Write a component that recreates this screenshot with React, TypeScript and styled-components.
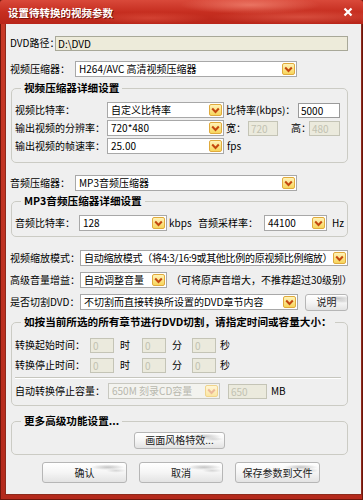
import styled, { createGlobalStyle } from 'styled-components';

const GlobalStyle = createGlobalStyle`
  html, body {
    margin: 0;
    padding: 0;
    background: #ffffff;
  }
  body {
    font-family: "Noto Sans CJK SC", "Liberation Sans", sans-serif;
    font-size: 10px;
    color: #000;
  }
  * {
    box-sizing: border-box;
  }
`;

const Window = styled.div`
  width: 363px;
  height: 500px;
  display: flex;
  flex-direction: column;
  background: linear-gradient(180deg, #c93a28, #b42a1c);
  box-shadow: inset 0 0 0 1px #6e160c;
`;

const TitleBar = styled.div`
  height: 24px;
  flex: none;
  display: flex;
  align-items: center;
  justify-content: space-between;
  padding: 0 10px 0 8px;
  background:
    radial-gradient(ellipse 70px 9px at 250px 5px, rgba(255, 160, 140, 0.55), transparent),
    radial-gradient(ellipse 90px 7px at 300px 17px, rgba(255, 140, 120, 0.35), transparent),
    radial-gradient(ellipse 60px 6px at 150px 18px, rgba(255, 120, 100, 0.3), transparent),
    linear-gradient(180deg, #d9493a 0%, #c62e20 50%, #b9261a 100%);
  border-radius: 3px 3px 0 0;
`;

const Title = styled.span`
  color: #fff;
  font-weight: 700;
  font-size: 10.5px;
  text-shadow: 1px 1px 0 #7a140a;
`;

const Frame = styled.div`
  flex: 1;
  display: flex;
  padding: 0 5px 5px;
`;

const Body = styled.div`
  flex: 1;
  display: flex;
  flex-direction: column;
  background: #efefef;
  border: 1px solid #8d2a1c;
  border-top: none;
  padding: 0 9px 0 4px;
`;

const Row = styled.div<{ $mt: number; $h?: number; $center?: boolean; $gap?: number }>`
  display: flex;
  align-items: center;
  justify-content: ${(p) => (p.$center ? 'center' : 'flex-start')};
  gap: ${(p) => p.$gap ?? 0}px;
  height: ${(p) => p.$h ?? 16}px;
  margin-top: ${(p) => p.$mt}px;
`;

const Text = styled.span<{ $w?: number; $ml?: number }>`
  flex: none;
  width: ${(p) => (p.$w ? `${p.$w}px` : 'auto')};
  margin-left: ${(p) => p.$ml ?? 0}px;
  white-space: nowrap;
  line-height: 14px;
`;

const Group = styled.fieldset<{ $mt: number; $pb: number }>`
  margin: ${(p) => p.$mt}px 0 0 1px;
  min-width: 0;
  width: 337px;
  border: 1px solid #cbcbc4;
  border-radius: 5px;
  padding: 0 3px ${(p) => p.$pb}px;
`;

const Legend = styled.legend`
  font-weight: 700;
  font-size: 10.6px;
  line-height: 14px;
  padding: 0 3px;
  margin-left: 6px;
  color: #000;
`;

const SelectBox = styled.div<{ $w: number; $off?: boolean }>`
  flex: none;
  width: ${(p) => p.$w}px;
  height: 16px;
  display: flex;
  align-items: center;
  background: ${(p) => (p.$off ? '#f3f3ef' : '#ffffff')};
  border: 1px solid ${(p) => (p.$off ? '#c8c8c0' : '#a8a8a8')};
  padding: 0 1px 0 3px;
  color: ${(p) => (p.$off ? '#b8b8ae' : '#000')};
`;

const SelectText = styled.span<{ $tight?: boolean }>`
  flex: 1;
  min-width: 0;
  white-space: nowrap;
  line-height: 14px;
  letter-spacing: ${(p) => (p.$tight ? '-0.3px' : '0')};
`;

const DropBtn = styled.span<{ $off?: boolean }>`
  flex: none;
  width: 13px;
  height: 12px;
  display: flex;
  align-items: center;
  justify-content: center;
  border: 1px solid ${(p) => (p.$off ? '#f0d48c' : '#e0aa3c')};
  border-radius: 2px;
  background: ${(p) =>
    p.$off
      ? 'linear-gradient(180deg, #fff6d6, #fbe6a4)'
      : 'linear-gradient(180deg, #fff3b8, #f7d55c)'};
`;

const Field = styled.div<{ $w: number; $tone?: 'off' | 'path' }>`
  flex: none;
  width: ${(p) => p.$w}px;
  height: 15px;
  padding-left: 2px;
  line-height: 13px;
  white-space: nowrap;
  border: 1px solid
    ${(p) => (p.$tone === 'off' ? '#c4c4b6' : p.$tone === 'path' ? '#a8a898' : '#9a9a9a')};
  background: ${(p) =>
    p.$tone === 'off' ? '#ebeadd' : p.$tone === 'path' ? '#edebda' : '#ffffff'};
  color: ${(p) => (p.$tone === 'off' ? '#c2c2b2' : '#000')};
`;

const Sep = styled.div`
  height: 2px;
  margin: 3px 3px 0 0;
  border-top: 1px solid #c6c6be;
  border-bottom: 1px solid #ffffff;
`;

const Btn = styled.button<{ $w: number; $h: number; $ml?: number }>`
  flex: none;
  width: ${(p) => p.$w}px;
  height: ${(p) => p.$h}px;
  margin-left: ${(p) => p.$ml ?? 0}px;
  padding: 0;
  font-family: inherit;
  font-size: 10px;
  line-height: 12px;
  color: #222;
  border: 1px solid #b6b6b6;
  border-radius: 3px;
  background:
    radial-gradient(ellipse 24px 4px at 78% 22%, rgba(130, 130, 130, 0.45), transparent 70%),
    radial-gradient(ellipse 14px 3px at 88% 40%, rgba(150, 150, 150, 0.35), transparent 70%),
    linear-gradient(180deg, #ffffff 0%, #f5f5f5 50%, #e3e3e3 100%);
`;

const Spaced = styled.div<{ $ml: number }>`
  flex: none;
  margin-left: ${(p) => p.$ml}px;
  display: flex;
`;

function Chevron({ off }: { off?: boolean }) {
  return (
    <svg width="9" height="7" viewBox="0 0 9 7">
      <path
        d="M1.2 1.5 L4.5 5 L7.8 1.5"
        fill="none"
        stroke={off ? '#ecb898' : '#c4480e'}
        strokeWidth="2"
      />
    </svg>
  );
}

function Select({ w, text, off, tight }: { w: number; text: string; off?: boolean; tight?: boolean }) {
  return (
    <SelectBox $w={w} $off={off}>
      <SelectText $tight={tight}>{text}</SelectText>
      <DropBtn $off={off}>
        <Chevron off={off} />
      </DropBtn>
    </SelectBox>
  );
}

function CloseIcon() {
  return (
    <svg width="10" height="10" viewBox="0 0 10 10">
      <path d="M1.5 1.5 L8.5 8.5 M8.5 1.5 L1.5 8.5" stroke="#fff" strokeWidth="2.2" />
    </svg>
  );
}

function TimeRow({ label, mt }: { label: string; mt: number }) {
  return (
    <Row $mt={mt} $h={18}>
      <Text $w={75}>{label}</Text>
      <Field $w={24} $tone="off">0</Field>
      <Text $w={22} $ml={6}>时</Text>
      <Field $w={24} $tone="off">0</Field>
      <Text $w={20} $ml={6}>分</Text>
      <Field $w={24} $tone="off">0</Field>
      <Text $ml={4}>秒</Text>
    </Row>
  );
}

export default function App() {
  return (
    <>
      <GlobalStyle />
      <Window>
        <TitleBar>
          <Title>设置待转换的视频参数</Title>
          <CloseIcon />
        </TitleBar>
        <Frame>
          <Body>
            <Row $mt={11}>
              <Text $w={45}>DVD路径：</Text>
              <Field $w={293} $tone="path">D:\DVD</Field>
            </Row>
            <Row $mt={10}>
              <Text $w={65}>视频压缩器：</Text>
              <Select w={222} text="H264/AVC 高清视频压缩器" />
            </Row>

            <Group $mt={4} $pb={7}>
              <Legend>视频压缩器详细设置</Legend>
              <Row $mt={6} $h={18}>
                <Text $w={92}>视频比特率：</Text>
                <Select w={117} text="自定义比特率" />
                <Text $w={72} $ml={2}>比特率(kbps)：</Text>
                <Field $w={42}>5000</Field>
              </Row>
              <Row $mt={0} $h={18}>
                <Text $w={92}>输出视频的分辨率：</Text>
                <Select w={117} text="720*480" />
                <Text $w={22} $ml={2}>宽：</Text>
                <Field $w={30} $tone="off">720</Field>
                <Text $w={18} $ml={13}>高：</Text>
                <Field $w={31} $tone="off">480</Field>
              </Row>
              <Row $mt={0} $h={18}>
                <Text $w={92}>输出视频的帧速率：</Text>
                <Select w={117} text="25.00" />
                <Text $ml={3}>fps</Text>
              </Row>
            </Group>

            <Row $mt={12}>
              <Text $w={65}>音频压缩器：</Text>
              <Select w={222} text="MP3音频压缩器" />
            </Row>

            <Group $mt={3} $pb={4}>
              <Legend>MP3音频压缩器详细设置</Legend>
              <Row $mt={6} $h={18}>
                <Text $w={64}>音频比特率：</Text>
                <Select w={88} text="128" />
                <Text $w={22} $ml={2}>kbps</Text>
                <Text $w={66} $ml={7}>音频采样率：</Text>
                <Select w={63} text="44100" />
                <Text $ml={5}>Hz</Text>
              </Row>
            </Group>

            <Row $mt={12} $h={18}>
              <Text $w={70}>视频缩放模式：</Text>
              <Select w={268} tight text="自动缩放模式（将4:3/16:9或其他比例的原视频比例缩放）" />
            </Row>
            <Row $mt={4} $h={18}>
              <Text $w={70}>高级音量增益：</Text>
              <Select w={87} text="自动调整音量" />
              <Text $ml={4}>（可将原声音增大，不推荐超过30级别）</Text>
            </Row>
            <Row $mt={4} $h={18}>
              <Text $w={70}>是否切割DVD：</Text>
              <Select w={218} text="不切割而直接转换所设置的DVD章节内容" />
              <Btn $w={43} $h={17} $ml={7}>说明</Btn>
            </Row>

            <Group $mt={4} $pb={5}>
              <Legend>如按当前所选的所有章节进行DVD切割，请指定时间或容量大小：</Legend>
              <TimeRow label="转换起始时间：" mt={7} />
              <TimeRow label="转换停止时间：" mt={2} />
              <Sep />
              <Row $mt={3} $h={18}>
                <Text $w={93}>自动转换停止容量：</Text>
                <Select w={112} text="650M 刻录CD容量" off />
                <Spaced $ml={8}>
                  <Field $w={39} $tone="off">650</Field>
                </Spaced>
                <Text $ml={4}>MB</Text>
              </Row>
            </Group>

            <Group $mt={8} $pb={5}>
              <Legend>更多高级功能设置...</Legend>
              <Row $mt={3} $h={18} $center>
                <Btn $w={91} $h={17}>画面风格特效...</Btn>
              </Row>
            </Group>

            <Row $mt={7} $h={21} $center $gap={12}>
              <Btn $w={85} $h={21}>确认</Btn>
              <Btn $w={84} $h={21}>取消</Btn>
              <Btn $w={85} $h={21}>保存参数到文件</Btn>
            </Row>
          </Body>
        </Frame>
      </Window>
    </>
  );
}
